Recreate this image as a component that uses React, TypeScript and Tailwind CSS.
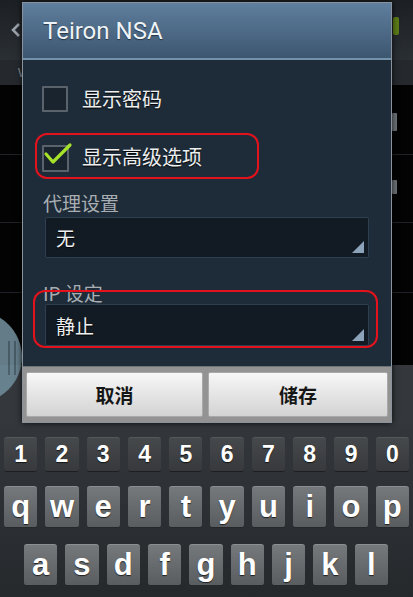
import React from "react";

const cjk = { fontFamily: '"Noto Sans CJK SC", "Noto Sans", sans-serif' };
const latin = { fontFamily: '"Liberation Sans", Arial, sans-serif' };

function Triangle() {
  return (
    <svg className="absolute right-[4px] bottom-[4px]" width="12" height="12" viewBox="0 0 12 12">
      <polygon points="12,0 12,12 0,12" fill="#8da3ba" />
    </svg>
  );
}

function Spinner({ text, h }: { text: string; h: string }) {
  return (
    <div className={`relative ml-[22px] mr-[22px] ${h} flex items-center rounded-[2px] border border-[#2e3f4f] bg-[#121b24] pl-[10px]`}>
      <span className="text-[19px] leading-none text-[#eef0f2]" style={{ ...cjk, textShadow: "0 1px 1px #000" }}>{text}</span>
      <Triangle />
    </div>
  );
}

function Key({ label, dark }: { label: string; dark?: boolean }) {
  return (
    <div
      className={`flex-1 flex items-center justify-center rounded-[3px] border-t border-b ${
        dark
          ? "h-[35px] bg-gradient-to-b from-[#46494c] to-[#37393c] border-t-[#55585b] border-b-[#1c1e20] text-[23px]"
          : "h-[42px] bg-gradient-to-b from-[#76797c] to-[#5a5d60] border-t-[#8c8f92] border-b-[#25272a] text-[31px]"
      } text-white`}
      style={{ ...latin, textShadow: "0 1px 1px rgba(0,0,0,0.7)" }}
    >
      <span className={dark ? "leading-none font-bold" : "leading-none font-bold -mt-[1px]"}>{label}</span>
    </div>
  );
}

export default function App() {
  return (
    <div className="w-[413px] h-[597px] overflow-hidden flex flex-col bg-black">
      {/* background app + dialog */}
      <div className="relative h-[425px] flex flex-col">
        <div className="h-[60px] bg-gradient-to-b from-[#1c2024] to-[#2a2f34] flex items-center justify-between">
          <svg width="30" height="30" viewBox="0 0 30 30" className="ml-[2px] -mt-[1px]">
            <polyline points="17,9 11,15 17,21" fill="none" stroke="#9ba3aa" strokeWidth="2.5" />
          </svg>
          <div className="w-[6px] h-[18px] bg-[#5b7a16] rounded-[2px] mr-[14px] -mt-[8px]" />
        </div>
        <div className="h-[25px] bg-[#25292d] flex items-center pl-[18px]">
          <span className="text-[12px] text-[#8a9096]" style={latin}>W</span>
        </div>
        <div className="relative flex-1 bg-[#030303] flex flex-col">
          <div className="h-[70px] border-b border-[#1f2226]" />
          <div className="h-[68px] border-b border-[#1f2226]" />
          <div className="h-[70px] border-b border-[#1f2226]" />
          <div className="h-[72px]" />
          <div className="flex-1 bg-[#34383c]" />
          <div className="absolute right-[16px] top-[28px] w-[5px] h-[18px] bg-[#6d7378] rounded-[1px]" />
          <div className="absolute right-[16px] top-[95px] w-[5px] h-[14px] bg-[#6d7378] rounded-[1px]" />
          <div className="absolute left-[-70px] top-[226px] w-[92px] h-[92px] rounded-full bg-[#6e8a97] opacity-90">
            <div className="absolute left-[78px] top-[30px] w-[2px] h-[34px] bg-[#4e6570]" />
            <div className="absolute left-[84px] top-[30px] w-[2px] h-[34px] bg-[#4e6570]" />
          </div>
        </div>

        {/* Dialog */}
        <div className="absolute left-[22px] top-[2px] w-[370px] h-[421px] border border-[#8a939c] flex flex-col bg-[#1e2c39] shadow-[0_0_6px_rgba(0,0,0,0.8)]">
          <div className="h-[57px] bg-gradient-to-b from-[#5f7f9e] to-[#3d5670] flex items-center pl-[20px] border-b-2 border-[#7592ab]">
            <span className="text-[24px] text-[#eef3f7] leading-none" style={{ fontFamily: 'Roboto, "Noto Sans", sans-serif', textShadow: "0 1px 1px rgba(0,0,0,0.5)" }}>
              Teiron NSA
            </span>
          </div>
          <div className="relative flex-1 flex flex-col pt-[26px]">
            <div className="flex items-center ml-[19px] h-[26px]">
              <div className="w-[26px] h-[26px] border-2 border-[#5a636c] bg-[#19242f] rounded-[1px]" />
              <span className="ml-[14px] text-[20px] text-[#eceef0] leading-none" style={{ ...cjk, textShadow: "0 1px 1px #000" }}>显示密码</span>
            </div>
            <div className="ml-[12px] mt-[21px] w-[224px] h-[46px] border-2 border-[#e3121c] rounded-[12px] flex items-center pl-[5px]">
              <div className="relative w-[27px] h-[27px] border-2 border-[#5a636c] bg-[#19242f] rounded-[1px] mt-[4px]">
                <svg className="absolute left-[-1px] top-[-6px] overflow-visible" width="30" height="24" viewBox="0 0 30 24">
                  <polyline points="3,13 10,21 27,4" fill="none" stroke="#a6e22a" strokeWidth="3.2" strokeLinecap="round" strokeLinejoin="round" />
                </svg>
              </div>
              <span className="ml-[13px] text-[20px] text-[#eceef0] leading-none mt-[2px]" style={{ ...cjk, textShadow: "0 1px 1px #000" }}>显示高级选项</span>
            </div>
            <div className="ml-[20px] mt-[11px] h-[24px] flex items-center">
              <span className="text-[19px] text-[#a9aeb3] leading-none" style={cjk}>代理设置</span>
            </div>
            <div className="mt-[3px]">
              <Spinner text="无" h="h-[41px]" />
            </div>
            <div className="ml-[20px] mt-[22px] h-[24px] flex items-center">
              <span className="text-[19px] text-[#a9aeb3] leading-none" style={cjk}>IP 设定</span>
            </div>
            <div className="mt-[0px]">
              <Spinner text="静止" h="h-[42px]" />
            </div>
            <div className="absolute left-[10px] top-[230px] w-[345px] h-[58px] border-2 border-[#e3121c] rounded-[12px]" />
          </div>
          <div className="h-[56px] bg-[#939393] border-t border-[#6e7378] flex gap-[5px] px-[3px] py-[5px]">
            <div className="w-[177px] rounded-[2px] border border-[#a9a9a9] bg-gradient-to-b from-[#f7f7f7] to-[#d3d3d3] flex items-center justify-center">
              <span className="text-[19px] font-bold text-[#151515] leading-none" style={cjk}>取消</span>
            </div>
            <div className="flex-1 rounded-[2px] border border-[#a9a9a9] bg-gradient-to-b from-[#f7f7f7] to-[#d3d3d3] flex items-center justify-center">
              <span className="text-[19px] font-bold text-[#151515] leading-none" style={cjk}>储存</span>
            </div>
          </div>
        </div>
      </div>

      {/* Keyboard */}
      <div className="flex-1 bg-gradient-to-b from-[#33373b] to-[#26292c] flex flex-col pt-[12px]">
        <div className="flex gap-[8px] px-[4px]">
          {["1", "2", "3", "4", "5", "6", "7", "8", "9", "0"].map((k) => (
            <Key key={k} label={k} dark />
          ))}
        </div>
        <div className="flex gap-[8px] px-[4px] mt-[14px]">
          {["q", "w", "e", "r", "t", "y", "u", "i", "o", "p"].map((k) => (
            <Key key={k} label={k} />
          ))}
        </div>
        <div className="flex gap-[8px] pl-[24px] pr-[25px] mt-[16px]">
          {["a", "s", "d", "f", "g", "h", "j", "k", "l"].map((k) => (
            <Key key={k} label={k} />
          ))}
        </div>
      </div>
    </div>
  );
}
